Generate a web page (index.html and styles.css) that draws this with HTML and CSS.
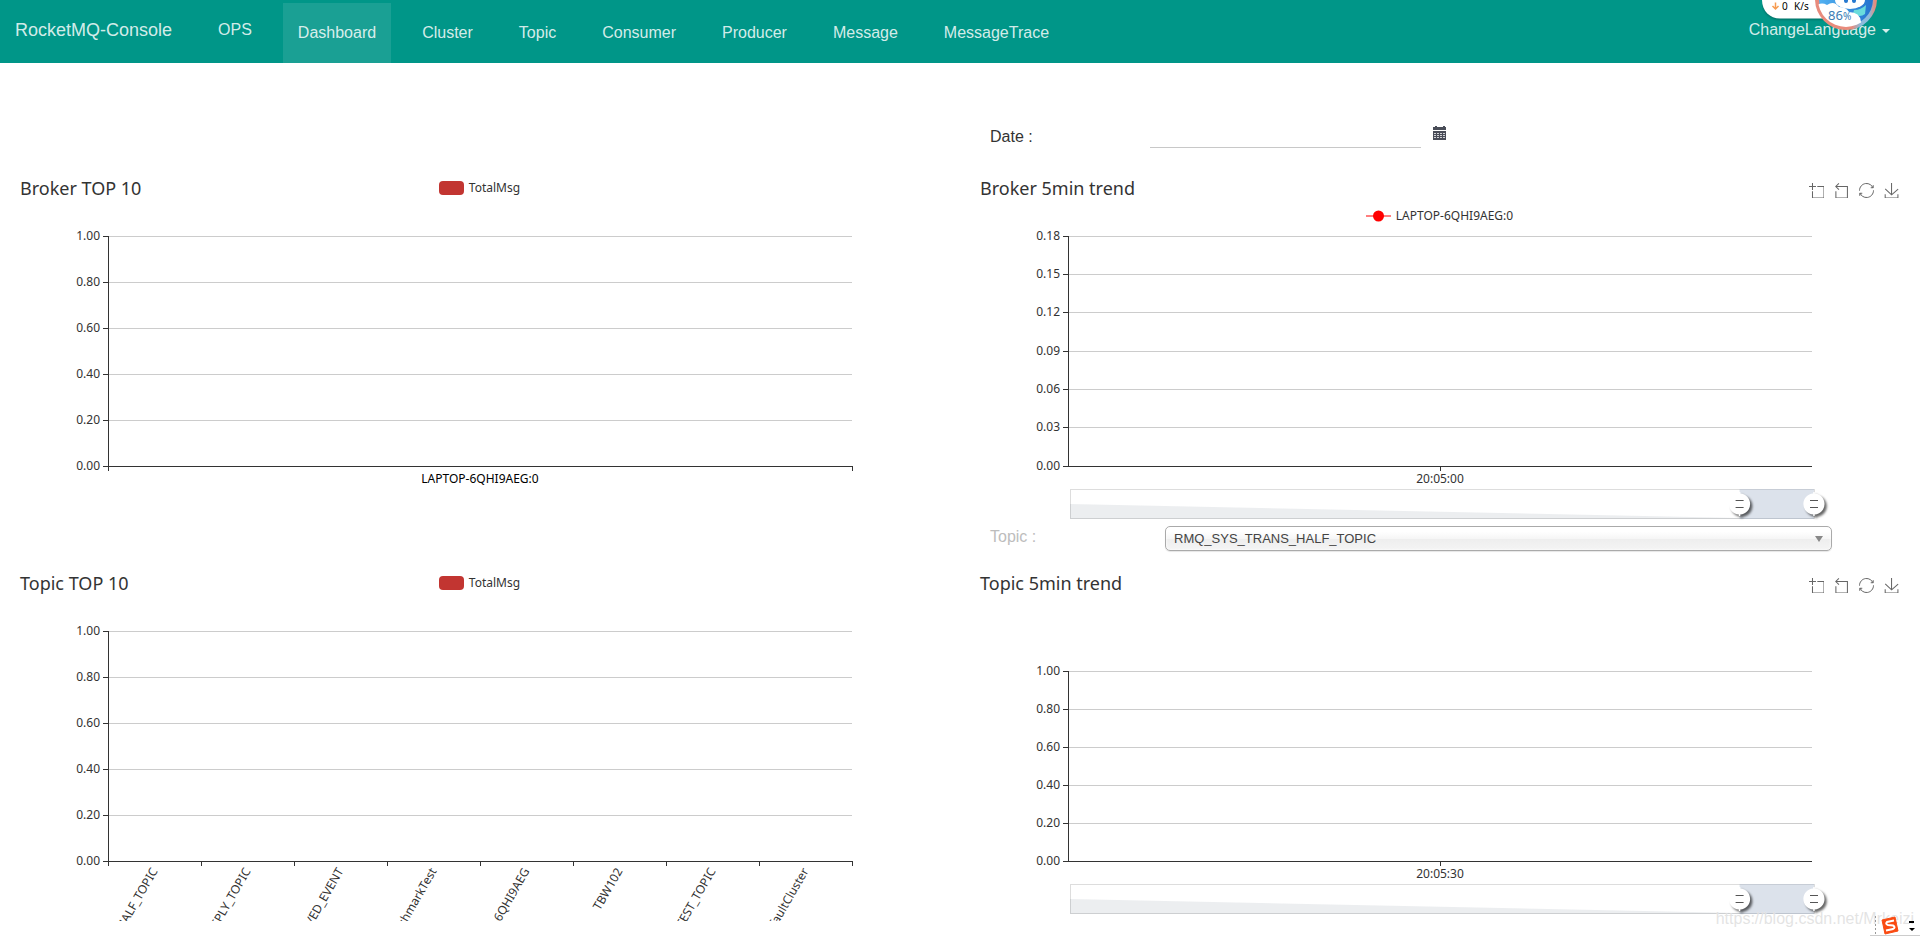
FILE: index.html
```html
<!DOCTYPE html>
<html lang="en">
<head>
<meta charset="utf-8">
<title>RocketMQ-Console</title>
<link rel="stylesheet" href="styles.css">
</head>
<body>
<svg class="defs" aria-hidden="true">
  <symbol id="i-zoom" viewBox="0 0 58 58"><path d="M0,13.5h26.9 M13.5,26.9V0 M32.1,13.5H58V58H13.5 V32.1"/></symbol>
  <symbol id="i-back" viewBox="3 0 58 58"><path d="M22,1.4L9.9,13.5l12.3,12.3 M10.3,13.5H54.9v44.6 H10.3v-26"/></symbol>
  <symbol id="i-restore" viewBox="0 0 60 60"><path d="M47,18.9h9.8V8.7 M56.3,20.1 C52.1,9,40.5,0.6,26.8,2.1C12.6,3.7,1.6,16.2,2.1,30.6 M13,41.1H3.1v10.2 M3.7,39.9c4.2,11.1,15.8,19.5,29.5,18 c14.2-1.6,25.2-14.1,24.7-28.5"/></symbol>
  <symbol id="i-save" viewBox="0 0 58 58"><path d="M4.7,22.9L29.3,45.5L54.7,23.4M4.6,43.6L4.6,58L53.8,58L53.8,43.6M29.2,45.1L29.2,0"/></symbol>
  <g id="handle"><path class="handle" transform="translate(0 15) scale(1.12) translate(-10 -21.3)" d="M10.7,11.9v-1.3H9.3v1.3c-4.9,0.3-8.8,4.4-8.8,9.4c0,5,3.9,9.1,8.8,9.4v1.3h1.3v-1.3c4.9-0.3,8.8-4.4,8.8-9.4C19.5,16.3,15.6,12.2,10.7,11.9z"/><path class="grip" d="M-4,11.5h8M-4,18.5h8"/></g>
</svg>

<nav class="navbar">
  <a class="brand" href="#">RocketMQ-Console</a>
  <a class="ops" href="#">OPS</a>
  <ul class="menu">
    <li><a class="active" href="#">Dashboard</a></li>
    <li><a href="#">Cluster</a></li>
    <li><a href="#">Topic</a></li>
    <li><a href="#">Consumer</a></li>
    <li><a href="#">Producer</a></li>
    <li><a href="#">Message</a></li>
    <li><a href="#">MessageTrace</a></li>
  </ul>
  <button class="language" type="button">ChangeLanguage<span class="caret"></span></button>
</nav>

<main>
  <form class="field date-field">
    <label for="date">Date :</label>
    <input id="date" type="text">
    <button class="calendar" type="button" aria-label="Open calendar">
      <svg viewBox="0 0 14 14" width="14" height="14">
        <path d="M0,1h2V0h2v1h6V0h2v1h1v3H0z M0,5h13v9H0z" fill="#4a4d58"/>
        <path d="M1,7.5h11M1,9.5h11M1,11.5h11" stroke="#fff" stroke-dasharray="2 1" stroke-opacity=".75" fill="none"/>
      </svg>
    </button>
  </form>

  <div class="charts">
    <section class="chart">
      <header>
        <h2>Broker TOP 10</h2>
        <div class="legend"><span class="swatch"></span>TotalMsg</div>
      </header>
      <svg class="plot">
        <g class="grid"><line y1="0.5" x2="100%" y2="0.5"/><line y1="46.5" x2="100%" y2="46.5"/><line y1="92.5" x2="100%" y2="92.5"/><line y1="138.5" x2="100%" y2="138.5"/><line y1="184.5" x2="100%" y2="184.5"/></g>
        <g class="axis"><path d="M.5,0V235M-5,.5H0M-5,46.5H0M-5,92.5H0M-5,138.5H0M-5,184.5H0M-5,230.5H0"/><line y1="230.5" x2="100%" y2="230.5"/><line x1="100%" y1="230" x2="100%" y2="235"/></g>
        <g class="ylabels"><text x="-8" y="4">1.00</text><text x="-8" y="50">0.80</text><text x="-8" y="96">0.60</text><text x="-8" y="142">0.40</text><text x="-8" y="188">0.20</text><text x="-8" y="234">0.00</text></g>
        <text class="xlabel strong" x="50%" y="247">LAPTOP-6QHI9AEG:0</text>
      </svg>
    </section>

    <section class="chart">
      <header>
        <h2>Broker 5min trend</h2>
        <div class="toolbox">
          <button type="button" aria-label="Zoom"><svg><use href="#i-zoom"/></svg></button>
          <button type="button" aria-label="Zoom reset"><svg><use href="#i-back"/></svg></button>
          <button type="button" aria-label="Restore"><svg><use href="#i-restore"/></svg></button>
          <button type="button" aria-label="Save as image"><svg><use href="#i-save"/></svg></button>
        </div>
        <div class="legend below">
          <svg width="25" height="14"><path d="M0,7H25" stroke="#ff7f7f" stroke-width="2"/><circle cx="12.5" cy="7" r="5.5" fill="red"/></svg>LAPTOP-6QHI9AEG:0
        </div>
      </header>
      <svg class="plot">
        <g class="grid"><line y1="0.5" x2="100%" y2="0.5"/><line y1="38.5" x2="100%" y2="38.5"/><line y1="76.5" x2="100%" y2="76.5"/><line y1="115.5" x2="100%" y2="115.5"/><line y1="153.5" x2="100%" y2="153.5"/><line y1="191.5" x2="100%" y2="191.5"/></g>
        <g class="axis"><path d="M.5,0V230M-5,.5H0M-5,38.5H0M-5,76.5H0M-5,115.5H0M-5,153.5H0M-5,191.5H0M-5,230.5H0"/><line y1="230.5" x2="100%" y2="230.5"/><line x1="50%" y1="230" x2="50%" y2="235"/></g>
        <g class="ylabels"><text x="-8" y="4">0.18</text><text x="-8" y="42">0.15</text><text x="-8" y="80">0.12</text><text x="-8" y="119">0.09</text><text x="-8" y="157">0.06</text><text x="-8" y="195">0.03</text><text x="-8" y="234">0.00</text></g>
        <text class="xlabel" x="50%" y="247">20:05:00</text>
        <svg class="slider" x="2" y="253" width="100%" height="30">
          <rect class="track" x="0.5" y="0.5" width="100%" height="29"/>
          <svg viewBox="0 0 100 30" width="100%" height="30" preserveAspectRatio="none"><path class="shadow" d="M0,15L90,29H100V30H0z"/></svg>
          <rect class="range" x="90%" y="0" width="10%" height="30"/>
          <svg class="slider" x="90%"><use href="#handle"/></svg>
          <svg class="slider" x="100%"><use href="#handle"/></svg>
        </svg>
      </svg>
    </section>
  </div>

  <form class="field topic-field">
    <label for="topic">Topic :</label>
    <div class="select">
      <select id="topic"><option>RMQ_SYS_TRANS_HALF_TOPIC</option></select>
    </div>
  </form>

  <div class="charts">
    <section class="chart">
      <header>
        <h2>Topic TOP 10</h2>
        <div class="legend"><span class="swatch"></span>TotalMsg</div>
      </header>
      <svg class="plot">
        <g class="grid"><line y1="0.5" x2="100%" y2="0.5"/><line y1="46.5" x2="100%" y2="46.5"/><line y1="92.5" x2="100%" y2="92.5"/><line y1="138.5" x2="100%" y2="138.5"/><line y1="184.5" x2="100%" y2="184.5"/></g>
        <g class="axis"><path d="M.5,0V235M-5,.5H0M-5,46.5H0M-5,92.5H0M-5,138.5H0M-5,184.5H0M-5,230.5H0"/><line y1="230.5" x2="100%" y2="230.5"/><line x1="12.5%" y1="230" x2="12.5%" y2="235"/><line x1="25%" y1="230" x2="25%" y2="235"/><line x1="37.5%" y1="230" x2="37.5%" y2="235"/><line x1="50%" y1="230" x2="50%" y2="235"/><line x1="62.5%" y1="230" x2="62.5%" y2="235"/><line x1="75%" y1="230" x2="75%" y2="235"/><line x1="87.5%" y1="230" x2="87.5%" y2="235"/><line x1="100%" y1="230" x2="100%" y2="235"/></g>
        <g class="ylabels"><text x="-8" y="4">1.00</text><text x="-8" y="50">0.80</text><text x="-8" y="96">0.60</text><text x="-8" y="142">0.40</text><text x="-8" y="188">0.20</text><text x="-8" y="234">0.00</text></g>
        <g class="slanted">
          <svg x="6.25%" y="238"><text y="4" transform="rotate(-60)">RMQ_SYS_TRANS_HALF_TOPIC</text></svg>
          <svg x="18.75%" y="238"><text y="4" transform="rotate(-60)">DefaultCluster_REPLY_TOPIC</text></svg>
          <svg x="31.25%" y="238"><text y="4" transform="rotate(-60)">OFFSET_MOVED_EVENT</text></svg>
          <svg x="43.75%" y="238"><text y="4" transform="rotate(-60)">BenchmarkTest</text></svg>
          <svg x="56.25%" y="238"><text y="4" transform="rotate(-60)">LAPTOP-6QHI9AEG</text></svg>
          <svg x="68.75%" y="238"><text y="4" transform="rotate(-60)">TBW102</text></svg>
          <svg x="81.25%" y="238"><text y="4" transform="rotate(-60)">SELF_TEST_TOPIC</text></svg>
          <svg x="93.75%" y="238"><text y="4" transform="rotate(-60)">DefaultCluster</text></svg>
        </g>
      </svg>
    </section>

    <section class="chart">
      <header>
        <h2>Topic 5min trend</h2>
        <div class="toolbox">
          <button type="button" aria-label="Zoom"><svg><use href="#i-zoom"/></svg></button>
          <button type="button" aria-label="Zoom reset"><svg><use href="#i-back"/></svg></button>
          <button type="button" aria-label="Restore"><svg><use href="#i-restore"/></svg></button>
          <button type="button" aria-label="Save as image"><svg><use href="#i-save"/></svg></button>
        </div>
      </header>
      <svg class="plot">
        <g class="grid"><line y1="40.5" x2="100%" y2="40.5"/><line y1="78.5" x2="100%" y2="78.5"/><line y1="116.5" x2="100%" y2="116.5"/><line y1="154.5" x2="100%" y2="154.5"/><line y1="192.5" x2="100%" y2="192.5"/></g>
        <g class="axis"><path d="M.5,40V230M-5,40.5H0M-5,78.5H0M-5,116.5H0M-5,154.5H0M-5,192.5H0M-5,230.5H0"/><line y1="230.5" x2="100%" y2="230.5"/><line x1="50%" y1="230" x2="50%" y2="235"/></g>
        <g class="ylabels"><text x="-8" y="44">1.00</text><text x="-8" y="82">0.80</text><text x="-8" y="120">0.60</text><text x="-8" y="158">0.40</text><text x="-8" y="196">0.20</text><text x="-8" y="234">0.00</text></g>
        <text class="xlabel" x="50%" y="247">20:05:30</text>
        <svg class="slider" x="2" y="253" width="100%" height="30">
          <rect class="track" x="0.5" y="0.5" width="100%" height="29"/>
          <svg viewBox="0 0 100 30" width="100%" height="30" preserveAspectRatio="none"><path class="shadow" d="M0,15L90,29H100V30H0z"/></svg>
          <rect class="range" x="90%" y="0" width="10%" height="30"/>
          <svg class="slider" x="90%"><use href="#handle"/></svg>
          <svg class="slider" x="100%"><use href="#handle"/></svg>
        </svg>
      </svg>
    </section>
  </div>
</main>

<div class="netmeter">
  <svg width="116" height="36" viewBox="0 0 116 36">
    <defs>
      <clipPath id="ball"><circle cx="84" cy="-1" r="28"/></clipPath>
      <linearGradient id="sky" x2="1"><stop offset="0" stop-color="#53b4f3"/><stop offset="1" stop-color="#2371cc"/></linearGradient>
      <linearGradient id="ring" x2="1"><stop offset=".6" stop-color="#e88b7c"/><stop offset=".75" stop-color="#8dbbdc"/><stop offset=".9" stop-color="#8dbbdc"/><stop offset="1" stop-color="#e88b7c"/></linearGradient>
    </defs>
    <path class="pill" d="M0,0C0,11 8,18.500 18,18.500H70V0z"/>
    <path d="M13.500,2.500v6M10.500,6l3,3l3,-3" stroke="#f79b50" stroke-width="1.500" fill="none"/>
    <text x="20" y="10">0</text><text x="32" y="10">K/s</text>
    <circle cx="84" cy="-1" r="29" fill="url(#sky)" stroke="url(#ring)" stroke-width="4"/>
    <g clip-path="url(#ball)">
      <ellipse cx="88" cy="0" rx="15" ry="9" fill="#fff"/>
      <path d="M84,0v1M92,0v1" stroke="#2679d0" stroke-width="4" stroke-linecap="round"/>
      <path d="M92,10Q99,10 104,5L103,14Q98,18 91,14z" fill="#69dcdc"/>
      <path d="M52,32V8Q58,1 65,5Q72,0 77,7Q84,7 87,12Q98,12 99,22Q101,30 84,30z" fill="#fff"/>
    </g>
    <text class="percent" x="66" y="20">86<tspan class="unit">%</tspan></text>
  </svg>
</div>

<div class="watermark">https://blog.csdn.net/Mrkeizi</div>
<div class="ime">
  <svg width="50" height="21" viewBox="0 0 50 21">
    <path d="M5.500,0V18" stroke="#999" stroke-dasharray="2 2"/>
    <path d="M0,19.500H50" stroke="#ccc"/>
    <path d="M12,4L25,1L28,15L15,18z" fill="#fa4b12" stroke="#fa4b12" stroke-linejoin="round"/>
    <path d="M24,4.500L17,6Q15,8 18,9L23,9.500Q26,11 23,13L16,14.500" stroke="#fff" stroke-width="2" fill="none"/>
    <path d="M39,5h5v2h-5zM39,12h6l-3,3z" fill="#000"/>
  </svg>
</div>
</body>
</html>
```

FILE: styles.css
```css
* { box-sizing: border-box; }

body {
  margin: 0;
  position: relative;
  min-height: 100vh;
  overflow-x: hidden;
  background: #fff;
  color: #333;
  font-family: "Liberation Sans", Arial, sans-serif;
  font-size: 16px;
}

button {
  padding: 0;
  border: 0;
  background: none;
  color: inherit;
  font: inherit;
  cursor: pointer;
}

.defs {
  position: absolute;
  width: 0;
  height: 0;
}

/* Navigation bar */
.navbar {
  display: flex;
  align-items: flex-start;
  height: 63px;
  padding: 0 30px 0 15px;
  background: #009688;
  color: rgba(255, 255, 255, 0.84);
}

.navbar a {
  color: inherit;
  text-decoration: none;
}

.brand,
.ops,
.language {
  height: 60px;
  line-height: 60px;
}

.brand { font-size: 18px; }

.ops { margin-left: 46px; }

.menu {
  display: flex;
  gap: 16px;
  margin: 3px 0 0 31px;
  padding: 0;
  list-style: none;
}

.menu a {
  display: block;
  height: 60px;
  padding: 0 15px;
  line-height: 60px;
}

.menu .active { background: rgba(255, 255, 255, 0.1); }

.language {
  display: flex;
  align-items: center;
  gap: 6px;
  margin-left: auto;
}

.caret {
  margin-top: 2px;
  border: 4px solid transparent;
  border-top-color: currentColor;
  border-bottom: 0;
}

/* Fields above the trend charts */
.field {
  display: flex;
  align-items: flex-start;
  margin-left: 50%;
  padding-left: 30px;
}

.field label {
  flex: 0 0 160px;
  line-height: 20px;
}

.date-field {
  height: 113px;
  padding-top: 55px;
}

.date-field label { padding-top: 9px; }

.date-field input {
  width: 271px;
  height: 30px;
  border: 0;
  border-bottom: 1px solid #c8c8c8;
  outline: 0;
  background: none;
  font: inherit;
}

.calendar {
  height: 14px;
  margin: 8px 0 0 12px;
}

.calendar svg { display: block; }

.topic-field {
  height: 45px;
  padding-right: 88px;
}

.topic-field label {
  padding-top: 1px;
  color: #bdbdbd;
}

.select {
  position: relative;
  flex: 1;
  margin-left: 15px;
}

.select::after {
  content: "";
  position: absolute;
  top: 10px;
  right: 9px;
  border: 4px solid transparent;
  border-top: 6px solid #888;
  border-bottom: 0;
  pointer-events: none;
}

.select select {
  display: block;
  width: 100%;
  height: 25px;
  padding: 0 8px;
  border: 1px solid #aaa;
  border-radius: 5px;
  appearance: none;
  background: linear-gradient(#fff 20%, #f6f6f6 50%, #eee 52%, #f4f4f4 100%);
  box-shadow: 0 0 3px #fff inset, 0 1px 1px rgba(0, 0, 0, 0.1);
  color: #444;
  font: 13px "Liberation Sans", Arial, sans-serif;
}

/* Charts */
.charts {
  display: grid;
  grid-template-columns: 1fr 1fr;
}

.chart {
  height: 350px;
  padding: 0 15px;
  font-family: "Noto Sans", "Open Sans", sans-serif;
  font-size: 12px;
}

.chart header {
  display: grid;
  grid-template-columns: 1fr auto 1fr;
  grid-template-rows: 24px 24px;
  align-items: center;
  height: 60px;
  padding: 0 6px 0 5px;
}

.chart h2 {
  margin: 0;
  font-size: 18px;
  font-weight: 400;
  line-height: 24px;
  white-space: nowrap;
}

.legend {
  display: flex;
  grid-column: 2;
  align-items: center;
  gap: 5px;
  line-height: 16px;
}

.legend.below {
  grid-row: 2;
  align-self: end;
}

.swatch {
  width: 25px;
  height: 14px;
  border-radius: 4px;
  background: #c23531;
}

.toolbox {
  display: flex;
  grid-column: 3;
  justify-content: flex-end;
  gap: 10px;
  padding-top: 4px;
}

.toolbox svg {
  display: block;
  width: 15px;
  height: 15px;
  overflow: visible;
  fill: none;
  stroke: #666;
  stroke-width: 4;
}

/* Labels and ticks hang outside the plot area; slanted ones stop at the chart's bottom */
.plot {
  display: block;
  width: 80%;
  height: 290px;
  margin: 0 auto;
  overflow: visible;
  clip-path: inset(-20px -80px 0 -80px);
}

.chart .plot text { fill: #333; }

.grid { stroke: #ccc; shape-rendering: crispEdges; }

.axis { fill: none; stroke: #333; shape-rendering: crispEdges; }

.ylabels { text-anchor: end; }

.xlabel { text-anchor: middle; }

.chart .plot .strong { fill: #000; }

.slanted { text-anchor: end; }

.slanted svg,
.slider { overflow: visible; }

.track { fill: none; stroke: #ddd; }

.shadow { fill: #2f4554; opacity: 0.09; }

.range { fill: #a7b7cc; opacity: 0.4; }

.handle {
  fill: #fff;
  filter: drop-shadow(2px 2px 1px rgba(0, 0, 0, 0.6));
}

.grip { stroke: #555; stroke-width: 1; }

/* Desktop overlays */
.netmeter {
  position: absolute;
  top: 0;
  right: 42px;
  color: #333;
  font: 10px "Noto Sans", sans-serif;
}

.netmeter svg { display: block; }

.pill {
  fill: #fff;
  filter: drop-shadow(0 1px 1px rgba(0, 0, 0, 0.3));
}

.percent { fill: #3a7cb5; font-size: 13px; }

.unit { font-size: 10px; }

.watermark {
  position: absolute;
  right: 6px;
  bottom: 8px;
  color: rgba(200, 200, 200, 0.5);
  line-height: 20px;
  text-shadow: 0 0 1px #fff;
}

.ime {
  position: absolute;
  right: 0;
  bottom: 0;
}

.ime svg { display: block; }
```
